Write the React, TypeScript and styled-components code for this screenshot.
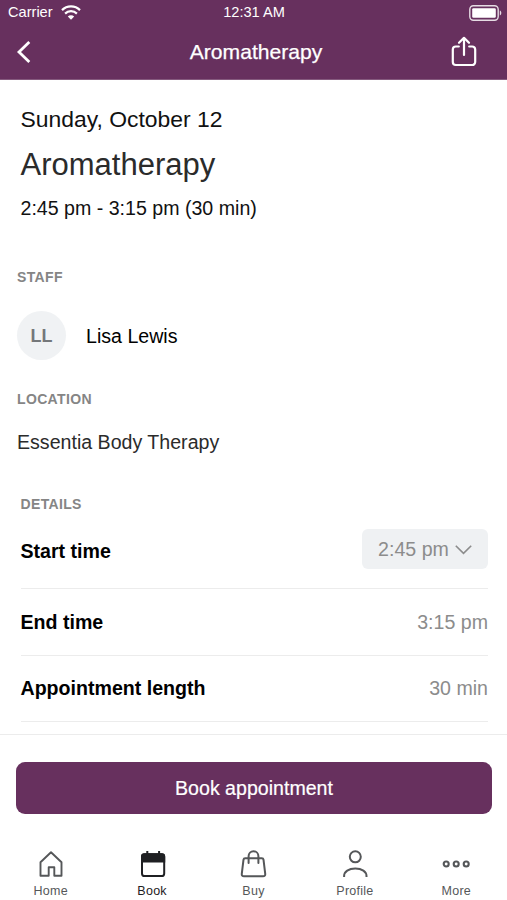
import React from "react";
import styled, { createGlobalStyle } from "styled-components";

const plum = "#67305e";

const GlobalStyle = createGlobalStyle`
  * { box-sizing: border-box; }
  body { margin: 0; background: #fff; }
  button { font: inherit; border: 0; margin: 0; padding: 0; background: none; color: inherit; }
  svg { display: block; flex: none; }
`;

const Screen = styled.div`
  width: 507px;
  height: 900px;
  overflow: hidden;
  display: flex;
  flex-direction: column;
  background: #fff;
  color: #111;
  font-family: "Liberation Sans", Arial, sans-serif;
  font-size: 19.6px;
  white-space: nowrap;
`;

const Header = styled.header`
  height: 80px;
  flex: none;
  background: ${plum};
  border-bottom: 1px solid #855a7e;
  color: #fff;
`;

const StatusBar = styled.div`
  height: 25px;
  padding: 0 5px 1px 8px;
  display: grid;
  grid-template-columns: 1fr auto 1fr;
  align-items: center;
  font-size: 14.6px;
`;

const Carrier = styled.div`
  display: flex;
  align-items: center;
  gap: 8px;
`;

const Clock = styled.span`
  margin-right: 2px;
`;

const BatterySlot = styled.div`
  justify-self: end;
  padding-top: 1px;
`;

const NavBar = styled.div`
  height: 54px;
  padding: 0 30px 0 16px;
  display: grid;
  grid-template-columns: 1fr auto 1fr;
  align-items: center;
`;

const NavTitle = styled.h1`
  margin: 0 0 0 19px;
  font-size: 21.1px;
  font-weight: 400;
  line-height: 24px;
  -webkit-text-stroke: 0.25px currentColor;
`;

const IconButton = styled.button<{ $end?: boolean }>`
  justify-self: ${(p) => (p.$end ? "end" : "start")};
`;

const Content = styled.main`
  height: 654px;
  flex: none;
  overflow: hidden;
`;

const Summary = styled.section`
  padding: 24px 20px 0 20.5px;
  height: 182px;
`;

const DateLine = styled.div`
  font-size: 22.9px;
  line-height: 30px;
`;

const ServiceName = styled.h2`
  margin: 11px 0 0;
  font-size: 31px;
  font-weight: 400;
  line-height: 40px;
  color: #2b2b2b;
`;

const TimeLine = styled.div`
  margin-top: 11px;
  font-size: 19.6px;
  line-height: 24px;
`;

const SectionLabel = styled.h3`
  margin: 0;
  font-size: 14px;
  font-weight: 700;
  line-height: 16px;
  letter-spacing: 0.35px;
  color: #858585;
`;

const Staff = styled.section`
  height: 122px;
  padding: 7px 17px 0;
`;

const Person = styled.div`
  margin-top: 26px;
  display: flex;
  align-items: center;
  gap: 20px;
  color: #000;
`;

const PersonName = styled.span`
  padding-top: 2px;
`;

const Avatar = styled.div`
  width: 49px;
  height: 49px;
  border-radius: 50%;
  display: grid;
  place-items: center;
  padding-top: 1px;
  background: #f0f2f4;
  color: #74777a;
  font-size: 18px;
  font-weight: 700;
`;

const Location = styled.section`
  height: 105px;
  padding: 7px 17px 0;
  color: #2b2b2b;
`;

const Place = styled.div`
  margin-top: 23px;
  line-height: 24px;
`;

const Details = styled.section`
  padding: 7px 19px 0 20.5px;
`;

const DetailRow = styled.div<{ $tall?: boolean }>`
  height: ${(p) => (p.$tall ? 77 : 66.5)}px;
  padding-bottom: ${(p) => (p.$tall ? 2 : 0)}px;
  display: flex;
  align-items: center;
  justify-content: space-between;
  border-bottom: 1px solid #ececec;
`;

const DetailName = styled.span<{ $drop?: number }>`
  padding-top: ${(p) => p.$drop ?? 1}px;
  font-weight: 700;
  color: #000;
`;

const DetailValue = styled.span`
  padding-top: 1px;
  color: #8c8c8c;
`;

const TimeSelect = styled.button`
  width: 126px;
  height: 40px;
  border-radius: 6px;
  background: #eff1f3;
  color: #8c8c8c;
  display: flex;
  align-items: center;
  justify-content: center;
  gap: 6px;
`;

const BookingBar = styled.div`
  height: 106px;
  flex: none;
  padding: 27px 15px 0 16px;
  border-top: 1px solid #ececec;
`;

const BookButton = styled.button`
  width: 100%;
  height: 52px;
  border-radius: 9px;
  background: ${plum};
  color: #fff;
  -webkit-text-stroke: 0.2px currentColor;
`;

const TabBar = styled.nav`
  height: 60px;
  display: grid;
  grid-template-columns: repeat(5, 1fr);
`;

const Tab = styled.button<{ $active?: boolean }>`
  padding-top: 9px;
  display: flex;
  flex-direction: column;
  align-items: center;
  gap: 4px;
  font-size: 12.5px;
  line-height: 17px;
  letter-spacing: 0.25px;
  color: ${(p) => (p.$active ? "#1f2023" : "#555759")};
`;

const stroke = { fill: "none", stroke: "currentColor" } as const;

const WifiIcon = () => (
  <svg width="20" height="15" viewBox="0 0 20 15" {...stroke} strokeWidth="2.2">
    <path d="M1 5.1a12.8 12.8 0 0 1 18 0M4.1 8.6a8.4 8.4 0 0 1 11.8 0" />
    <path d="M6.8 11.6a4.6 4.6 0 0 1 6.4 0L10 14.8z" fill="currentColor" stroke="none" />
  </svg>
);

const BatteryIcon = () => (
  <svg width="33" height="16" viewBox="0 0 33 16">
    <rect x="0.8" y="0.8" width="28.4" height="14.4" rx="3.6" fill="none" stroke="#e6dce4" strokeWidth="1.4" />
    <rect x="3.2" y="3.2" width="23.6" height="9.6" rx="1.2" fill="#fff" />
    <path d="M30.8 5.6c2 .6 2 4.2 0 4.8z" fill="#e6dce4" />
  </svg>
);

const BackIcon = () => (
  <svg width="16" height="24" viewBox="0 0 16 24" {...stroke} strokeWidth="2.8">
    <path d="M13.3 2 3 12l10.3 10" />
  </svg>
);

const ShareIcon = () => (
  <svg width="26" height="32" viewBox="0 0 26 32" {...stroke} strokeWidth="2.2" strokeLinecap="round" strokeLinejoin="round">
    <path d="M7.8 10.5h-3a3 3 0 0 0-3 3V26a3 3 0 0 0 3 3h16.400a3 3 0 0 0 3-3V13.500a3 3 0 0 0-3-3h-3" />
    <path d="M13 19V2.200M8 6.800l5-5 5 5" />
  </svg>
);

const ChevronIcon = () => (
  <svg width="17" height="12" viewBox="0 0 17 12" {...stroke} strokeWidth="1.6">
    <path d="m.8 2.700 7.700 7.700 7.700-7.700" />
  </svg>
);

const HomeIcon = () => (
  <svg width="28" height="30" viewBox="0 0 28 30" {...stroke} strokeWidth="1.9" strokeLinejoin="round">
    <path d="M3.500 13.300 14 3.300l10.500 10v13.500h-7.200v-8.500h-5.600v8.500H3.500z" />
  </svg>
);

const CalendarIcon = () => (
  <svg width="28" height="30" viewBox="0 0 28 30" {...stroke} strokeWidth="2">
    <rect x="4" y="5.200" width="22.200" height="21.800" rx="2.600" />
    <path d="M4 12.500V7.500q0-2.300 2.300-2.300h17.600q2.300 0 2.300 2.300v5z" fill="currentColor" />
    <path d="M9.300 2v4M21.100 2v4" />
  </svg>
);

const BagIcon = () => (
  <svg width="28" height="30" viewBox="0 0 28 30" {...stroke} strokeWidth="2" strokeLinecap="round" strokeLinejoin="round">
    <path d="M6.200 9.200h16.600q1.500 0 1.700 1.500l1.700 14q.3 2.500-2.200 2.500H5q-2.500 0-2.200-2.500l1.700-14q.2-1.500 1.700-1.500z" />
    <path d="M9.600 14V7.200a4.900 4.900 0 0 1 9.800 0V14" />
  </svg>
);

const ProfileIcon = () => (
  <svg width="28" height="30" viewBox="0 0 28 30" {...stroke} strokeWidth="2">
    <circle cx="14.300" cy="7.800" r="5.500" />
    <path d="M3.100 28v-1c0-4.400 4.600-7.600 11.200-7.600s11.200 3.200 11.200 7.600v1" />
  </svg>
);

const MoreIcon = () => (
  <svg width="28" height="30" viewBox="0 0 28 30" {...stroke} strokeWidth="2.1">
    <circle cx="4.200" cy="15" r="2.500" />
    <circle cx="14.200" cy="15" r="2.500" />
    <circle cx="24.200" cy="15" r="2.500" />
  </svg>
);

const tabs = [
  { name: "Home", Icon: HomeIcon },
  { name: "Book", Icon: CalendarIcon, active: true },
  { name: "Buy", Icon: BagIcon },
  { name: "Profile", Icon: ProfileIcon },
  { name: "More", Icon: MoreIcon },
];

export default function App() {
  return (
    <>
      <GlobalStyle />
      <Screen>
        <Header>
          <StatusBar>
            <Carrier>
              Carrier
              <WifiIcon />
            </Carrier>
            <Clock>12:31 AM</Clock>
            <BatterySlot>
              <BatteryIcon />
            </BatterySlot>
          </StatusBar>
          <NavBar>
            <IconButton aria-label="Back">
              <BackIcon />
            </IconButton>
            <NavTitle>Aromatherapy</NavTitle>
            <IconButton $end aria-label="Share">
              <ShareIcon />
            </IconButton>
          </NavBar>
        </Header>
        <Content>
          <Summary>
            <DateLine>Sunday, October 12</DateLine>
            <ServiceName>Aromatherapy</ServiceName>
            <TimeLine>2:45 pm - 3:15 pm (30 min)</TimeLine>
          </Summary>
          <Staff>
            <SectionLabel>STAFF</SectionLabel>
            <Person>
              <Avatar>LL</Avatar>
              <PersonName>Lisa Lewis</PersonName>
            </Person>
          </Staff>
          <Location>
            <SectionLabel>LOCATION</SectionLabel>
            <Place>Essentia Body Therapy</Place>
          </Location>
          <Details>
            <SectionLabel>DETAILS</SectionLabel>
            <DetailRow $tall>
              <DetailName $drop={4}>Start time</DetailName>
              <TimeSelect>
                2:45 pm
                <ChevronIcon />
              </TimeSelect>
            </DetailRow>
            <DetailRow>
              <DetailName>End time</DetailName>
              <DetailValue>3:15 pm</DetailValue>
            </DetailRow>
            <DetailRow>
              <DetailName>Appointment length</DetailName>
              <DetailValue>30 min</DetailValue>
            </DetailRow>
          </Details>
        </Content>
        <BookingBar>
          <BookButton>Book appointment</BookButton>
        </BookingBar>
        <TabBar>
          {tabs.map(({ name, Icon, active }) => (
            <Tab key={name} $active={active}>
              <Icon />
              {name}
            </Tab>
          ))}
        </TabBar>
      </Screen>
    </>
  );
}
